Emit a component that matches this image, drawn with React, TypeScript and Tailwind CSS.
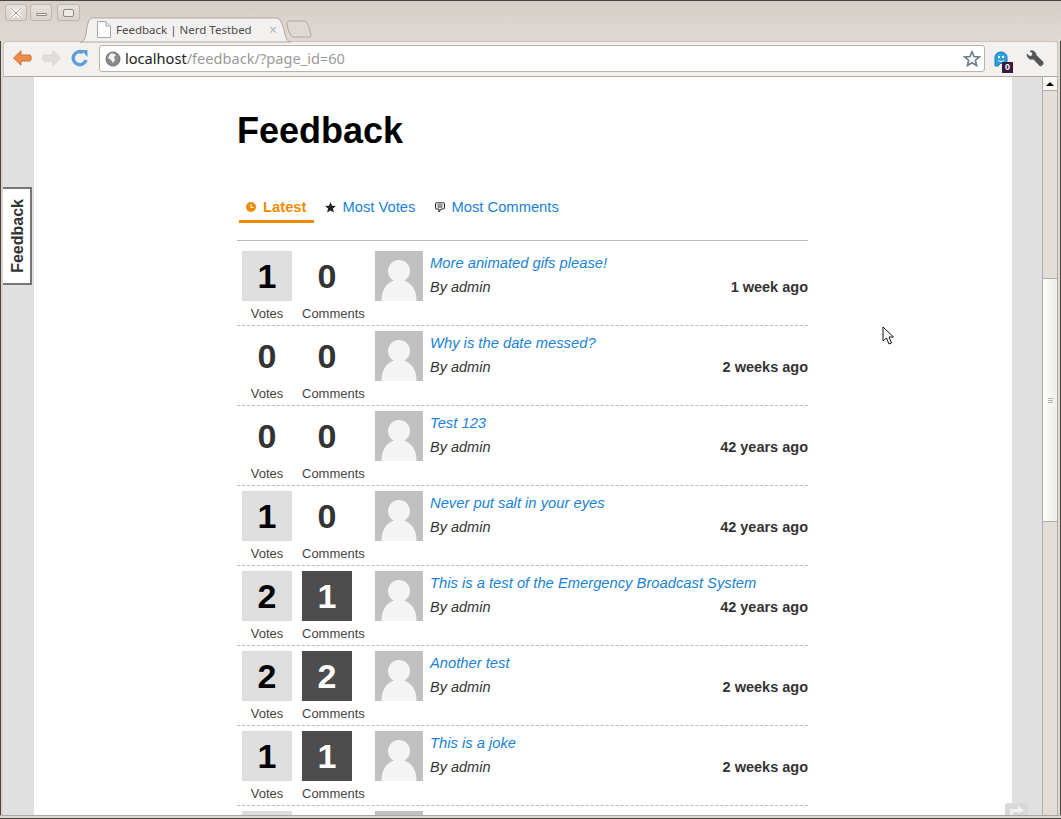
const POSTS = [
  { votes: 1, comments: 0, title: "More animated gifs please!", date: "1 week ago" },
  { votes: 0, comments: 0, title: "Why is the date messed?", date: "2 weeks ago" },
  { votes: 0, comments: 0, title: "Test 123", date: "42 years ago" },
  { votes: 1, comments: 0, title: "Never put salt in your eyes", date: "42 years ago" },
  { votes: 2, comments: 1, title: "This is a test of the Emergency Broadcast System", date: "42 years ago" },
  { votes: 2, comments: 2, title: "Another test", date: "2 weeks ago" },
  { votes: 1, comments: 1, title: "This is a joke", date: "2 weeks ago" },
];

function WindowButton({ children, className = "" }: { children: React.ReactNode; className?: string }) {
  return (
    <div className={`flex h-[17px] items-center justify-center rounded-[3px] border border-[#bdb6ae] bg-gradient-to-b from-[#e6e1dc] to-[#d9d2cb] ${className}`}>
      {children}
    </div>
  );
}

function Avatar() {
  return (
    <svg width="48" height="50" viewBox="0 0 48 50" className="shrink-0">
      <rect width="48" height="50" fill="#c0c0c0" />
      <circle cx="24" cy="20" r="11" fill="#f4f4f4" />
      <path d="M6.5 50C6.5 36 14 29 24 29C34 29 41.5 36 41.5 50Z" fill="#f4f4f4" />
    </svg>
  );
}

function Count({ value, dark }: { value: number; dark?: boolean }) {
  let tone = "text-[#333]";
  if (value > 0) tone = dark ? "bg-[#4d4d4d] text-white" : "bg-[#dedede] text-black";
  return (
    <div className={`flex h-[50px] w-[50px] items-center justify-center text-[34px] font-bold ${tone}`}>
      {value}
    </div>
  );
}

function PostRow({ post }: { post: (typeof POSTS)[number] }) {
  return (
    <div className="flex h-[80px] shrink-0 border-b border-dashed border-[#bbb] pl-[5px] pt-[5px] first:h-[85px] first:pt-[10px]">
      <div className="flex w-[50px] flex-col items-center">
        <Count value={post.votes} />
        <span className="mt-[5px] text-[13px] leading-[15px] text-[#444]">Votes</span>
      </div>
      <div className="ml-[10px] flex w-[50px] flex-col items-start">
        <Count value={post.comments} dark />
        <span className="mt-[5px] whitespace-nowrap text-[13px] leading-[15px] text-[#444]">Comments</span>
      </div>
      <div className="ml-[23px]">
        <Avatar />
      </div>
      <div className="ml-[7px] flex-1 leading-[24px]">
        <div className="text-[14.75px] italic text-[#1a82d8]">{post.title}</div>
        <div className="flex justify-between text-[14.5px] text-[#333]">
          <span className="italic">By admin</span>
          <span className="font-bold">{post.date}</span>
        </div>
      </div>
    </div>
  );
}

function TitleBar() {
  return (
    <div className="relative h-[41px] shrink-0 border-t border-[#45443f] bg-gradient-to-b from-[#d6cec7] to-[#e0d9d3] pl-[5px] pt-[3px]">
      <div className="flex">
        <WindowButton className="w-[22px]">
          <svg width="14" height="12" viewBox="0 0 14 12">
            <path d="M2 1.5L12 10.5M12 1.5L2 10.5" stroke="#fff" strokeWidth="3.5" />
            <path d="M2 1.5L12 10.5M12 1.5L2 10.5" stroke="#8f8a84" strokeWidth="1" />
          </svg>
        </WindowButton>
        <WindowButton className="ml-[3px] w-[22px]">
          <div className="mt-[4px] h-[3px] w-[11px] rounded-[1px] border border-[#8f8a84] bg-[#efebe7]" />
        </WindowButton>
        <WindowButton className="ml-[5px] w-[23px]">
          <div className="h-[8px] w-[11px] rounded-[2px] border border-[#8f8a84] bg-[#efebe7]" />
        </WindowButton>
      </div>
      <svg width="236" height="27" viewBox="0 0 236 27" className="absolute left-[80px] top-[15px]">
        <path d="M0 26C4 26 5 23 6 18C7 10 8 2 13 2H196C201 2 203 10 205 18C206 23 208 26 211 26Z" fill="#f3f1ef" stroke="#aea79f" />
        <path d="M207 7C207 6 208 5 209 5H224C227 5 229 10 231 19C231 20 231 21 230 21H213C210 20 207 12 207 7Z" fill="#e0d9d3" stroke="#aea79f" />
      </svg>
      <div className="absolute left-[97px] top-[20px] flex h-[17px] w-[180px] items-center">
        <svg width="14" height="17" viewBox="0 0 14 17" className="shrink-0">
          <path d="M.5.5H9L13.5 5V16.5H.5Z" fill="#fcfcfc" stroke="#a9a9a9" />
          <path d="M9 .5V5H13.5" fill="#e4e4e4" stroke="#a9a9a9" />
        </svg>
        <span className="ml-[5px] whitespace-nowrap font-['Noto_Sans',sans-serif] text-[11.5px] text-[#4c4c4c]">
          Feedback | Nerd Testbed
        </span>
        <span className="ml-auto text-[14px] leading-none text-[#b5b5b5]">×</span>
      </div>
    </div>
  );
}

function Toolbar() {
  return (
    <div className="flex h-[36px] shrink-0 bg-[#e0d9d3]">
      <div className="w-[3px] self-stretch border-l border-[#45443f]" />
      <div className="flex h-full flex-1 items-start rounded-t-[4px] border border-[#c9c3bb] border-b-[#b0aaa2] bg-[#f3f1ef] pl-[9px] pr-[13px] pt-[3px]">
        <svg width="19" height="16" viewBox="0 0 19 16" className="mt-[5px] shrink-0">
          <path d="M.5 8L8 .8V5H17C18.5 5 18.5 11 17 11H8V15.2Z" fill="#ee8a4a" stroke="#d0702f" strokeLinejoin="round" />
        </svg>
        <svg width="19" height="16" viewBox="0 0 19 16" className="ml-[10px] mt-[5px] shrink-0">
          <path d="M18.5 8L11 .8V5H2C.5 5 .5 11 2 11H11V15.2Z" fill="#e0dedb" stroke="#d6d4d1" strokeLinejoin="round" />
        </svg>
        <svg width="18" height="18" viewBox="0 0 18 18" className="ml-[10px] mt-[4px] shrink-0">
          <path d="M15 11A6.5 6.5 0 1 1 12 3.5" fill="none" stroke="#5f9fd8" strokeWidth="3.5" />
          <path d="M10 1L16.5 1V8Z" fill="#5f9fd8" />
        </svg>
        <div className="ml-[10px] flex h-[27px] flex-1 items-center rounded-[3px] border border-[#b9b4a8] bg-white pl-[5px] pr-[3px]">
          <svg width="16" height="16" viewBox="0 0 16 16" className="shrink-0">
            <circle cx="8" cy="8" r="7" fill="#8a8a8a" stroke="#6f6f6f" />
            <path d="M5 3C7 2 10 3 11 4L9 6L10 9L8 12L6 9L3 7Z" fill="#f2f2f2" />
          </svg>
          <span className="ml-[4px] font-['Noto_Sans',sans-serif] text-[14.6px] text-[#222]">
            localhost<span className="text-[#9a9a9a]">/feedback/?page_id=60</span>
          </span>
          <svg width="18" height="18" viewBox="0 0 18 18" className="ml-auto shrink-0">
            <path d="M9 1.8L11.1 6.5L16.3 7L12.4 10.4L13.6 15.5L9 12.8L4.4 15.5L5.6 10.4L1.7 7L6.9 6.5Z" fill="#f7f7f7" stroke="#6d7a8c" strokeWidth="1.6" />
          </svg>
        </div>
        <div className="relative ml-[9px] mt-[4px] h-[24px] w-[22px] shrink-0">
          <svg width="14" height="16" viewBox="0 0 14 16" className="absolute left-0 top-[2px]">
            <path d="M1 15V6C1 3 4 1 7 1C10 1 13 3 13 6V12L10 14L7 12L4 15Z" fill="#29a0e0" stroke="#1b7fb5" />
            <circle cx="5" cy="6" r="1.2" fill="#fff" />
            <circle cx="9" cy="6" r="1.2" fill="#fff" />
            <path d="M4 9C5 11 9 11 10 9" fill="none" stroke="#fff" />
          </svg>
          <div className="absolute left-[8px] top-[13px] flex h-[11px] w-[11px] items-center justify-center bg-[#3a1a3c] font-['Liberation_Sans',sans-serif] text-[9px] font-bold leading-none text-white">
            0
          </div>
        </div>
        <svg width="18" height="18" viewBox="0 0 18 18" className="ml-[10px] mt-[5px] shrink-0">
          <path d="M1 4L4 6.5L6.5 5.5L6.5 3L4 1C7 0 10 2 10 5L17 12C18 14 15.5 17 13.5 15.5L7.5 9C4 10 1 8 1 4Z" fill="#555" stroke="#4a4a4a" strokeWidth=".6" />
        </svg>
      </div>
      <div className="w-[3px] self-stretch border-r border-[#45443f]" />
    </div>
  );
}

function Scrollbar() {
  return (
    <div className="flex w-[16px] shrink-0 flex-col border-x border-[#b0aca5] bg-[#e2ded7]">
      <div className="flex h-[14px] shrink-0 items-center justify-center border-b border-[#b0aca5] bg-[#f9f7f3]">
        <div className="h-0 w-0 border-x-[4px] border-b-[4px] border-x-transparent border-b-black" />
      </div>
      <div className="h-[187px] shrink-0" />
      <div className="flex h-[244px] shrink-0 flex-col items-center justify-center gap-[1px] border-y border-[#b0aca5] bg-gradient-to-r from-white via-[#f7f5f2] to-[#ececea]">
        <div className="h-px w-[5px] bg-[#b3b3b3]" />
        <div className="h-px w-[5px] bg-[#b3b3b3]" />
        <div className="h-px w-[5px] bg-[#b3b3b3]" />
      </div>
    </div>
  );
}

function FeedbackPage() {
  return (
    <div className="relative min-w-0 flex-1 overflow-hidden bg-[#e0e0e0] pl-[31px] pr-[30px] font-['Liberation_Sans',sans-serif]">
      <div className="h-full bg-white pl-[203px]">
        <div className="w-[571px]">
          <h1 className="pt-[33px] text-[36px] font-bold leading-[41px] text-black">Feedback</h1>
          <div className="ml-[2px] mt-[43px] flex h-[29px] gap-[4px] text-[14.75px]">
            <div className="flex h-[29px] items-center border-b-[3px] border-[#ee8c00] pl-[7px] pr-[8px] font-bold text-[#ee8c00]">
              <svg width="10" height="10" viewBox="0 0 10 10" className="mr-[7px]">
                <circle cx="5" cy="5" r="5" fill="#ee8c00" />
                <path d="M5 2V5.5H7.5" fill="none" stroke="#fff" />
              </svg>
              Latest
            </div>
            <div className="flex h-[26px] items-center pl-[7px] pr-[7px] text-[#1a82d8]">
              <svg width="11" height="11" viewBox="0 0 10 10" className="mr-[6px]">
                <path d="M5 0L6.4 3.4L10 3.7L7.2 6L8.1 9.6L5 7.7L1.9 9.6L2.8 6L0 3.7L3.6 3.4Z" fill="#222" />
              </svg>
              Most Votes
            </div>
            <div className="flex h-[26px] items-center pl-[9px] text-[#1a82d8]">
              <svg width="10" height="11" viewBox="0 0 10 11" className="mr-[6px]">
                <path d="M1.5.8H8.5Q9.5.8 9.5 1.8V6Q9.5 7 8.5 7H6L4 10V7H1.5Q.5 7 .5 6V1.8Q.5.8 1.5.8Z" fill="#fff" stroke="#222" />
                <path d="M2.5 3H7.5M2.5 5H7.5" stroke="#222" />
              </svg>
              Most Comments
            </div>
          </div>
          <div className="mt-[17px] flex flex-col border-t border-[#bbb]">
            {POSTS.map((post) => (
              <PostRow key={post.title} post={post} />
            ))}
            {/* next row is cut off by the window, only the tops of its boxes show */}
            <div className="flex pl-[5px] pt-[5px]">
              <div className="h-[50px] w-[50px] bg-[#dedede]" />
              <div className="ml-[83px]">
                <Avatar />
              </div>
            </div>
          </div>
        </div>
      </div>
      <div className="absolute left-0 top-[110px] flex h-[98px] w-[29px] items-center justify-center border-2 border-l-0 border-[#777] bg-white pl-[3px]">
        <span className="rotate-180 text-[16px] font-bold text-[#333] [writing-mode:vertical-rl]">Feedback</span>
      </div>
      <div className="absolute bottom-0 right-[14px] flex h-[12px] w-[23px] justify-center rounded-t-[3px] bg-[#d9d9d9] pt-[2px]">
        <svg width="16" height="10" viewBox="0 0 16 10">
          <path d="M1 10V4H9V1L15 5L9 9V7H4V10Z" fill="#f2f2f2" />
        </svg>
      </div>
    </div>
  );
}

export default function App() {
  return (
    <div className="relative flex h-[819px] w-[1061px] flex-col overflow-hidden bg-[#e0d9d3]">
      <TitleBar />
      <Toolbar />
      <div className="flex min-h-0 flex-1">
        <div className="w-[3px] shrink-0 border-l border-[#45443f] bg-[#d9d3cc]" />
        <FeedbackPage />
        <Scrollbar />
        <div className="w-[3px] shrink-0 border-r border-[#45443f] bg-[#e0d9d3]" />
      </div>
      <div className="h-[4px] shrink-0 border-t border-[#aea79f] border-b border-b-[#45443f] bg-[#e0d9d3]" />
      <svg width="13" height="20" viewBox="0 0 13 20" className="absolute left-[882px] top-[326px]">
        <path d="M1 1V15L4.5 12L7 18L9.5 17L7 11H11.5Z" fill="#fff" stroke="#111" />
      </svg>
    </div>
  );
}
